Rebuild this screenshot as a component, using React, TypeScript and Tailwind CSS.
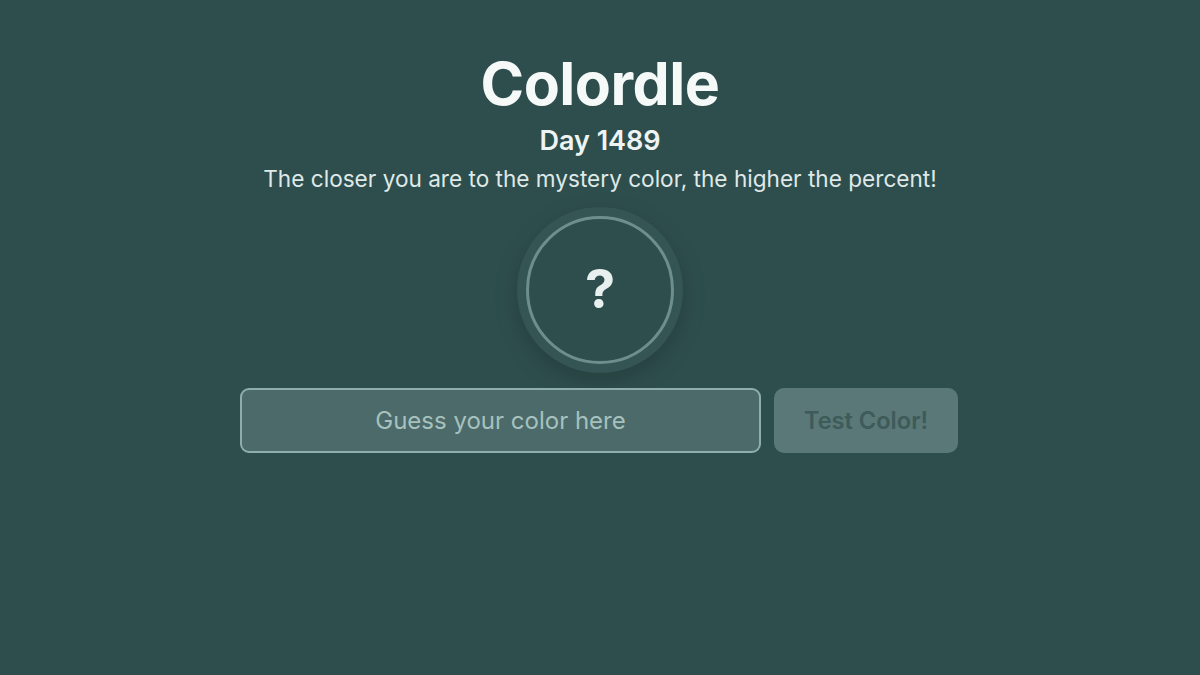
export default function App() {
  return (
    <div className="min-h-[675px] w-full bg-[#2e4e4d] font-['Inter','Noto_Sans',sans-serif] flex flex-col items-center pt-[48px]">
      <h1 className="text-[59px] leading-[72px] font-bold text-[#f5f9f8] tracking-[-0.5px]">Colordle</h1>
      <h2 className="mt-[5px] text-[27px] leading-[32px] font-semibold text-[#eef4f3]">Day 1489</h2>
      <p className="mt-[8px] text-[22.6px] leading-[28px] text-[#dfe9e8]">
        The closer you are to the mystery color, the higher the percent!
      </p>

      <div className="mt-[14px] w-[166px] h-[166px] rounded-full bg-[#355554] shadow-[0_8px_24px_rgba(0,0,0,0.18)] flex items-center justify-center">
        <div className="w-[148px] h-[148px] rounded-full border-[3px] border-[#6e8e8c] bg-[#2e4e4d] flex items-center justify-center">
          <span className="text-[54px] leading-none font-bold text-[#e8f0ef] -mt-[2px]">?</span>
        </div>
      </div>

      <div className="mt-[15px] flex gap-[13px] ml-[-2px]">
        <input
          className="w-[521px] h-[65px] rounded-[9px] border-2 border-[#8eadab] bg-[#4b6a69] text-center text-[24px] text-[#e8f0ef] placeholder:text-[#a6c1be] outline-none"
          placeholder="Guess your color here"
        />
        <button className="w-[184px] h-[65px] rounded-[10px] bg-[#5a7877] text-[23.6px] font-semibold text-[#3e5b5a]">
          Test Color!
        </button>
      </div>
    </div>
  );
}
